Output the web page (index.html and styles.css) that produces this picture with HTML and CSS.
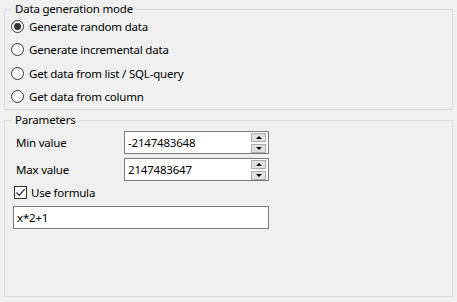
FILE: index.html
```html
<!DOCTYPE html>
<html>
<head>
<meta charset="utf-8">
<link rel="stylesheet" href="styles.css">
</head>
<body>
<div class="page">
  <div class="group group-mode">
    <div class="group-title">Data generation mode</div>
    <div class="options">
      <div class="option"><span class="radio checked"></span><span>Generate random data</span></div>
      <div class="option"><span class="radio"></span><span>Generate incremental data</span></div>
      <div class="option"><span class="radio"></span><span>Get data from list / SQL-query</span></div>
      <div class="option"><span class="radio"></span><span>Get data from column</span></div>
    </div>
  </div>
  <div class="group group-params">
    <div class="group-title">Parameters</div>
    <div class="params">
      <div class="field">
        <span class="field-label">Min value</span>
        <div class="spin">
          <span class="spin-value">-2147483648</span>
          <div class="spin-buttons">
            <span class="spin-btn"><span class="arrow-up"></span></span>
            <span class="spin-btn"><span class="arrow-down"></span></span>
          </div>
        </div>
      </div>
      <div class="field">
        <span class="field-label">Max value</span>
        <div class="spin">
          <span class="spin-value">2147483647</span>
          <div class="spin-buttons">
            <span class="spin-btn"><span class="arrow-up"></span></span>
            <span class="spin-btn"><span class="arrow-down"></span></span>
          </div>
        </div>
      </div>
      <div class="check-row">
        <span class="checkbox"><svg width="11" height="11" viewBox="0 0 11 11"><path d="M1.5 5.5 L4.2 8.3 L9.8 2.2" fill="none" stroke="#222" stroke-width="1.2"/></svg></span>
        <span>Use formula</span>
      </div>
      <div class="text-input">x*2+1</div>
    </div>
  </div>
</div>
</body>
</html>
```

FILE: styles.css
```css
html, body {
  margin: 0;
  padding: 0;
  background: #f0f0f0;
}
body {
  font-family: "Noto Sans", "Open Sans", sans-serif;
  font-size: 11.5px;
  letter-spacing: -0.2px;
  color: #000;
  width: 457px;
  height: 302px;
  overflow: hidden;
}
.page {
  padding: 9px 4px 0 4px;
  display: flex;
  flex-direction: column;
}
.group {
  border: 1px solid #dcdcdc;
  display: flex;
  flex-direction: column;
}
.group-title {
  align-self: flex-start;
  margin: -9px 0 0 0;
  padding: 0 3px 0 4px;
  height: 16px;
  line-height: 16px;
  background: #f0f0f0;
  white-space: nowrap;
}
.group-mode {
  padding: 0 0 1px 6px;
}
.options {
  display: flex;
  flex-direction: column;
  margin-top: -2px;
}
.option {
  height: 23px;
  display: flex;
  align-items: center;
  gap: 5px;
  white-space: nowrap;
}
.option:nth-child(3) { margin-top: 1px; }
.radio {
  width: 11px;
  height: 11px;
  border: 1px solid #333;
  border-radius: 50%;
  background: #fff;
  display: flex;
  align-items: center;
  justify-content: center;
  flex: none;
}
.radio.checked::after {
  content: "";
  width: 7px;
  height: 7px;
  border-radius: 50%;
  background: #333;
}
.group-params {
  margin-top: 10px;
  height: 175px;
  padding: 0 0 0 8px;
}
.group-params .group-title {
  margin-left: -2px;
}
.params {
  display: flex;
  flex-direction: column;
  margin-top: 3px;
}
.field {
  display: flex;
  align-items: center;
  height: 23px;
  margin-bottom: 4px;
}
.field-label {
  width: 108px;
  padding-left: 3px;
  white-space: nowrap;
}
.spin {
  width: 143px;
  height: 21px;
  border: 1px solid #7a7a7a;
  background: #fff;
  display: flex;
  align-items: center;
  justify-content: space-between;
}
.spin-value {
  padding-left: 3px;
  line-height: 16px;
}
.spin-buttons {
  display: flex;
  flex-direction: column;
  gap: 2px;
  margin-right: 2px;
}
.spin-btn {
  width: 13px;
  height: 7px;
  background: #e1e1e1;
  border: 1px solid #adadad;
  display: flex;
  align-items: center;
  justify-content: center;
}
.arrow-up {
  width: 0;
  height: 0;
  border-left: 3px solid transparent;
  border-right: 3px solid transparent;
  border-bottom: 3px solid #000;
}
.arrow-down {
  width: 0;
  height: 0;
  border-left: 3px solid transparent;
  border-right: 3px solid transparent;
  border-top: 3px solid #000;
}
.check-row {
  display: flex;
  align-items: center;
  gap: 4px;
  height: 17px;
  margin-top: -1px;
  padding-left: 1px;
}
.checkbox {
  width: 11px;
  height: 11px;
  border: 1px solid #333;
  background: #fff;
  display: flex;
  align-items: center;
  justify-content: center;
  flex: none;
}
.text-input {
  margin-top: 5px;
  width: 251px;
  height: 21px;
  border: 1px solid #7a7a7a;
  background: #fff;
  padding-left: 3px;
  line-height: 21px;
}
```
